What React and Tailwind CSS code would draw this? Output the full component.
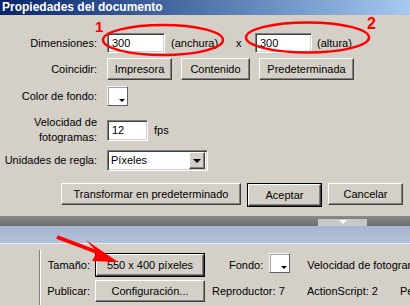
import React from "react";

const raised =
  "bg-[#d4d0c8] border border-t-white border-l-white border-b-[#404040] border-r-[#404040] shadow-[inset_-1px_-1px_#808080]";
const sunken =
  "bg-white border border-t-[#808080] border-l-[#808080] border-b-white border-r-white shadow-[inset_1px_1px_#404040,inset_-1px_-1px_#d4d0c8]";

function Btn({ children, className = "" }) {
  return (
    <div className={`${raised} flex items-center justify-center h-[22px] ${className}`}>
      {children}
    </div>
  );
}

function Field({ value, className = "" }) {
  return (
    <div className={`${sunken} flex items-center pl-[4px] ${className}`}>{value}</div>
  );
}

function Swatch() {
  return (
    <div className="relative w-[21px] h-[20px] bg-white border border-t-[#f4f4f4] border-l-[#f4f4f4] border-b-[#606060] border-r-[#606060] shadow-[inset_1px_1px_#a0a0a0]">
      <div className="absolute right-[2px] bottom-[3px] w-0 h-0 border-l-[3px] border-r-[3px] border-t-[3px] border-l-transparent border-r-transparent border-t-black" />
    </div>
  );
}

export default function App() {
  return (
    <div
      className="relative w-[410px] h-[305px] overflow-hidden bg-[#d4d0c8] text-black text-[11px] leading-none"
      style={{ fontFamily: '"Liberation Sans", Arial, sans-serif' }}
    >
      {/* barra de título */}
      <div className="h-[15px] bg-gradient-to-r from-[#0a246a] to-[#a6caf0] text-white font-bold text-[12px] leading-[15px] pl-[2px]">
        Propiedades del documento
      </div>

      {/* formulario */}
      <div className="flex flex-col">
        <div className="flex items-center h-[20px] mt-[18px]">
          <div className="w-[97px] text-right">Dimensiones:</div>
          <Field value="300" className="ml-[10px] w-[58px] h-[20px]" />
          <div className="ml-[6px] w-[65px]">(anchura)</div>
          <div className="w-[19px]">x</div>
          <Field value="300" className="w-[57px] h-[20px]" />
          <div className="ml-[5px]">(altura)</div>
        </div>

        <div className="flex items-center h-[22px] mt-[5px]">
          <div className="w-[97px] text-right">Coincidir:</div>
          <Btn className="ml-[10px] w-[65px]">Impresora</Btn>
          <Btn className="ml-[9px] w-[69px]">Contenido</Btn>
          <Btn className="ml-[9px] w-[95px]">Predeterminada</Btn>
        </div>

        <div className="flex items-center h-[20px] mt-[6px]">
          <div className="w-[97px] text-right">Color de fondo:</div>
          <div className="ml-[10px]">
            <Swatch />
          </div>
        </div>

        <div className="flex items-center h-[30px] mt-[9px]">
          <div className="w-[97px] text-right leading-[15px]">
            Velocidad de
            <br />
            fotogramas:
          </div>
          <Field value="12" className="ml-[10px] w-[41px] h-[21px]" />
          <div className="ml-[6px]">fps</div>
        </div>

        <div className="flex items-center h-[21px] mt-[5px]">
          <div className="w-[97px] text-right">Unidades de regla:</div>
          <div className={`${sunken} ml-[10px] w-[101px] h-[21px] flex items-center justify-between pl-[3px] pr-[2px]`}>
            <span>Píxeles</span>
            <div className={`${raised} w-[16px] h-[17px] flex items-center justify-center`}>
              <div className="w-0 h-0 border-l-[4px] border-r-[4px] border-t-[4px] border-l-transparent border-r-transparent border-t-black" />
            </div>
          </div>
        </div>

        <div className="flex justify-end gap-[6px] pr-[7px] mt-[12px]">
          <Btn className="w-[180px]">Transformar en predeterminado</Btn>
          <div className="border border-black">
            <Btn className="w-[73px] h-[20px]">Aceptar</Btn>
          </div>
          <Btn className="w-[75px]">Cancelar</Btn>
        </div>
      </div>

      {/* separador del inspector */}
      <div className="mt-[9px] h-[10px] bg-gradient-to-b from-[#8a8a8a] to-[#6e6e6e] flex">
        <div className="ml-[318px] mt-[3px] w-[49px] h-[7px] bg-[#c8c8c8] flex items-start justify-center">
          <div className="mt-[1px] w-0 h-0 border-l-[4px] border-r-[4px] border-t-[4px] border-l-transparent border-r-transparent border-t-white" />
        </div>
      </div>
      <div className="h-[18px] bg-gradient-to-b from-[#a4b6d0] to-[#b0c0d8] border-b border-[#e6ebf2]" />

      {/* propiedades */}
      <div className="flex h-[62px] pt-[6px]">
        <div className="ml-[39px] w-[2px] border-l border-l-[#808080] border-r border-r-white" />
        <div className="flex flex-col">
          <div className="flex items-center h-[22px] mt-[4px] whitespace-nowrap">
            <div className="w-[49px] text-right">Tamaño:</div>
            <div className="ml-[5px] border border-black">
              <Btn className="w-[108px] h-[20px]">550 x 400 píxeles</Btn>
            </div>
            <div className="ml-[24px]">Fondo:</div>
            <div className="ml-[6px] -mt-[4px]">
              <Swatch />
            </div>
            <div className="ml-[17px]">Velocidad de fotogramas: 12 fps</div>
          </div>
          <div className="flex items-center h-[22px] mt-[4px] whitespace-nowrap">
            <div className="w-[49px] text-right">Publicar:</div>
            <Btn className="ml-[5px] w-[110px]">Configuración...</Btn>
            <div className="ml-[7px] w-[95px]">Reproductor: 7</div>
            <div className="w-[93px]">ActionScript: 2</div>
            <div>Perfil: Predeterminado</div>
          </div>
        </div>
      </div>

      {/* anotaciones */}
      <span className="absolute left-[95px] top-[19px] text-[15px] font-bold text-[#ff0000]">1</span>
      <span className="absolute left-[367px] top-[16px] text-[16px] font-bold text-[#ff0000]">2</span>
      <svg className="absolute left-0 top-0 pointer-events-none" width="410" height="305">
        <ellipse cx="163" cy="40" rx="60" ry="15" fill="none" stroke="#ff0000" strokeWidth="2.5" />
        <ellipse cx="307.5" cy="37.5" rx="61.5" ry="15" fill="none" stroke="#ff0000" strokeWidth="2.5" />
        <line x1="57" y1="237" x2="102" y2="254" stroke="#ff0000" strokeWidth="4" />
        <polygon points="86,240 118,262 92,261 97,252" fill="#ff0000" />
      </svg>
    </div>
  );
}
